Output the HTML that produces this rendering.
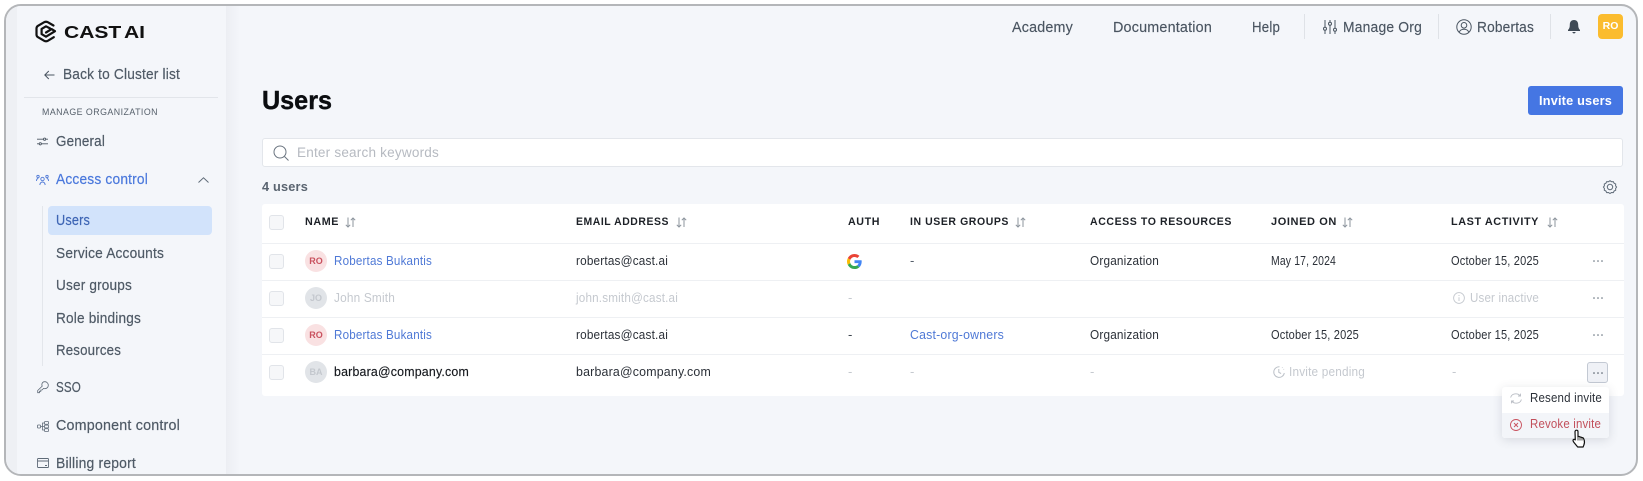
<!DOCTYPE html>
<html lang="en"><head><meta charset="utf-8"><title>Users - CAST AI</title>
<style>
html,body{margin:0;padding:0;background:#fff}
body{width:1643px;height:481px;overflow:hidden;position:relative;font-family:"Liberation Sans",Arial,sans-serif;font-size:13px;color:#2b3038}
#frame{position:absolute;left:4px;top:4px;width:1634px;height:472px;box-sizing:border-box;border:2px solid #b4b6b9;border-radius:17px;overflow:hidden;background:#f4f6fa}
#inner{position:absolute;left:-6px;top:-6px;width:1643px;height:481px}
.b{position:absolute}
.t{position:absolute;white-space:nowrap;line-height:20px;margin-top:-10px;transform-origin:0 50%;letter-spacing:.2px}
.nav{font-size:14.5px;color:#4f5a66;-webkit-text-stroke:.2px #4f5a66}
.top{font-size:14.5px;color:#4a5561;-webkit-text-stroke:.15px #4a5561}
.th{font-size:11px;font-weight:700;color:#1d2127;letter-spacing:.6px}
.m{color:#c5c9cf}.l{color:#4f79d6}.d{color:#2b3038}
.cb{position:absolute;left:269px;width:15px;height:15px;box-sizing:border-box;border:1px solid #e1e4e9;border-radius:3px;background:#f6f7f9}
.av{position:absolute;left:305px;width:22px;height:22px;border-radius:50%;text-align:center;line-height:22px;font-size:9px;font-weight:700}
.r{background:#f9e1e2;color:#c9525f}.g{background:#e1e4e8;color:#c4c8ce}
.ln{position:absolute;left:262px;width:1362px;height:1px;background:#eef0f3}
.dots{position:absolute;left:1592px;width:12px;height:2px}
.sep{position:absolute;top:14px;width:1px;height:25px;background:#dfe2e7}
svg{position:absolute;overflow:visible}
</style></head><body>
<div id="frame"><div id="inner">
<!-- left strip + sidebar -->
<div class="b" style="left:0;top:0;width:17px;height:481px;background:#eef0f4"></div>
<div class="b" style="left:17px;top:0;width:209px;height:481px;background:#f4f6fa"></div>
<div class="b" style="left:226px;top:0;width:14px;height:481px;background:linear-gradient(90deg,#eceef3,#f4f6fa)"></div>

<!-- logo -->
<svg style="left:35px;top:20px" width="22" height="23" viewBox="0 0 22 23" fill="none" stroke="#111" stroke-width="2.2" stroke-linejoin="round" stroke-linecap="round"><path d="M18.800 17.200 12.800 20.800c-1.100.6-2.500.6-3.600 0L3 17.200C2 16.600 1.500 15.700 1.500 14.600V8.400C1.500 7.300 2 6.400 3 5.800L9.200 2.200c1.100-.6 2.500-.6 3.600 0L18.500 5.500"/><path d="M15.200 8.500 11 6.300 6.600 8.900v5.200L11 16.700l9-5.500-3.400-2.100-5.600 3.400"/></svg>
<span class="t" style="left:64px;top:32px;font-size:17.500px;font-weight:700;color:#111;--w:81;letter-spacing:0;word-spacing:-2px">CAST AI</span>

<svg style="left:44px;top:70px" width="11" height="10" viewBox="0 0 11 10" fill="none" stroke="#4a5561" stroke-width="1"><path d="M10.500 5H.8M4.800 1 .8 5l4 4"/></svg>
<span class="t nav" style="left:63px;top:75px;--w:117">Back to Cluster list</span>
<div class="b" style="left:24px;top:97px;width:194px;height:1px;background:#e2e5ea"></div>
<span class="t" style="left:42px;top:112.500px;font-size:9.500px;color:#555f6a;letter-spacing:.5px;--w:116">MANAGE ORGANIZATION</span>

<!-- general icon -->
<svg style="left:37px;top:137px" width="11" height="9" viewBox="0 0 11 9" fill="none" stroke="#4a5561" stroke-width=".9"><path d="M0 2.200h6.500M8.800 2.200H11M0 6.800h2.200M4.500 6.800H11"/><circle cx="7.600" cy="2.200" r="1.100"/><circle cx="3.300" cy="6.800" r="1.100"/></svg>
<span class="t nav" style="left:56px;top:142px;--w:49">General</span>
<!-- access icon -->
<svg style="left:36px;top:174px" width="13" height="12" viewBox="0 0 13 12" fill="none" stroke="#4f79d6" stroke-width=".9"><circle cx="6.500" cy="5" r="1.700"/><path d="M3.800 11c.3-2 1.300-3 2.700-3s2.400 1 2.700 3"/><circle cx="2" cy="2.500" r="1.200"/><circle cx="11" cy="2.500" r="1.200"/><path d="M.5 7c0-1.500.6-2.500 1.800-2.500M12.500 7c0-1.500-.6-2.500-1.800-2.500"/></svg>
<span class="t" style="left:56px;top:180px;font-size:14.500px;color:#4a78dc;-webkit-text-stroke:.2px #4a78dc;--w:92">Access control</span>
<svg style="left:198px;top:177px" width="11" height="6" viewBox="0 0 11 6" fill="none" stroke="#5f6b78" stroke-width="1"><path d="M.5 5.500 5.500.8l5 4.700"/></svg>

<div class="b" style="left:42px;top:206px;width:1px;height:160px;background:#e3e6eb"></div>
<div class="b" style="left:48px;top:206px;width:164px;height:29px;background:#d2e3fb;border-radius:4px"></div>
<span class="t" style="left:56px;top:221px;font-size:14.500px;color:#3f66b5;-webkit-text-stroke:.2px #3f66b5;--w:34">Users</span>
<span class="t nav" style="left:56px;top:254px;--w:108">Service Accounts</span>
<span class="t nav" style="left:56px;top:286px;--w:76">User groups</span>
<span class="t nav" style="left:56px;top:319px;--w:85">Role bindings</span>
<span class="t nav" style="left:56px;top:351px;--w:65">Resources</span>

<svg style="left:37px;top:381px" width="12" height="13" viewBox="0 0 12 13" fill="none" stroke="#5f6b78" stroke-width=".8"><path d="M7.800.7a3.500 3.500 0 0 1 3.500 3.500c0 2-1.500 3.500-3.500 3.500-.5 0-1-.1-1.300-.2L5 9H3.800v1.300H2.500v1.400H.7V9.500l4.500-4.400C4.200 2.800 5.500.7 7.800.7z"/></svg>
<span class="t nav" style="left:56px;top:388px;--w:25">SSO</span>
<svg style="left:37px;top:421px" width="12" height="11" viewBox="0 0 12 11" fill="none" stroke="#5f6b78" stroke-width=".8"><rect x=".5" y="4" width="3" height="3" rx=".6"/><rect x="7.500" y=".5" width="4" height="2.800" rx=".6"/><rect x="7.500" y="4.100" width="4" height="2.800" rx=".6"/><rect x="7.500" y="7.700" width="4" height="2.800" rx=".6"/><path d="M3.500 5.500h4M5.500 5.500V2h2M5.500 5.500V9h2"/></svg>
<span class="t nav" style="left:56px;top:426px;--w:124">Component control</span>
<svg style="left:37px;top:458px" width="12" height="10" viewBox="0 0 12 10" fill="none" stroke="#5f6b78" stroke-width=".9"><rect x=".5" y=".5" width="11" height="9" rx=".8"/><path d="M.5 3h11M8 7.500h2"/></svg>
<span class="t nav" style="left:56px;top:464px;--w:80">Billing report</span>

<!-- top bar -->
<span class="t top" style="left:1012px;top:27.500px;--w:61">Academy</span>
<span class="t top" style="left:1113px;top:27.500px;--w:99">Documentation</span>
<span class="t top" style="left:1252px;top:27.500px;--w:28">Help</span>
<div class="sep" style="left:1304px"></div>
<svg style="left:1323px;top:20px" width="14" height="14" viewBox="0 0 14 14" fill="none" stroke="#4a5561" stroke-width="1"><path d="M2 0v7M2 10.500V14M7 0v2M7 5.500V14M12 0v8M12 11.500V14"/><circle cx="2" cy="8.700" r="1.500"/><circle cx="7" cy="3.700" r="1.500"/><circle cx="12" cy="9.700" r="1.500"/></svg>
<span class="t top" style="left:1343px;top:27.500px;--w:79">Manage Org</span>
<div class="sep" style="left:1438px"></div>
<svg style="left:1456px;top:19px" width="16" height="16" viewBox="0 0 16 16" fill="none" stroke="#4a5561" stroke-width="1"><circle cx="8" cy="8" r="7.200"/><circle cx="8" cy="6.300" r="2.800"/><path d="M3.200 13.200C4 11 5.800 10.200 8 10.200s4 .8 4.800 3"/></svg>
<span class="t top" style="left:1477px;top:27.500px;--w:57">Robertas</span>
<div class="sep" style="left:1550px"></div>
<svg style="left:1568px;top:20px" width="12" height="14" viewBox="0 0 12 14" fill="#3f4a55"><path d="M6 0c2.800 0 4.200 2 4.200 4.800 0 2.500.5 4 1.800 5.200v1H0v-1c1.300-1.200 1.800-2.700 1.800-5.200C1.800 2 3.200 0 6 0z"/><path d="M4.300 12h3.400c-.3 1-1 1.400-1.700 1.400S4.600 13 4.300 12z"/></svg>
<div class="b" style="left:1598px;top:14px;width:25px;height:25px;border-radius:4px;background:#fbbc2e;color:#fff;font-size:10.500px;font-weight:700;line-height:25px;text-align:center">RO</div>

<!-- heading -->
<span class="t" style="left:262px;top:100px;font-size:26px;font-weight:700;color:#0b0d10;-webkit-text-stroke:.4px #0b0d10;--w:70;letter-spacing:0;line-height:30px;margin-top:-15px">Users</span>
<div class="b" style="left:1528px;top:86px;width:95px;height:29px;background:#4576e3;border-radius:3px"></div>
<span class="t" style="left:1539px;top:100.500px;font-size:13px;font-weight:700;color:#fff;--w:73">Invite users</span>

<!-- search -->
<div class="b" style="left:262px;top:138px;width:1361px;height:29px;box-sizing:border-box;background:#fff;border:1px solid #e3e6eb;border-radius:3px"></div>
<svg style="left:273px;top:145px" width="16" height="16" viewBox="0 0 16 16" fill="none" stroke="#6b7580" stroke-width="1"><circle cx="7" cy="7" r="6"/><path d="M11.500 11.500 15.500 15.500"/></svg>
<span class="t" style="left:297px;top:153px;font-size:13.500px;color:#b6bac1;--w:142">Enter search keywords</span>
<span class="t" style="left:262px;top:187px;font-size:13px;font-weight:700;color:#5a6470;--w:46">4 users</span>
<svg style="left:1603px;top:180px" width="14" height="14" viewBox="0 0 14 14" fill="none" stroke="#5f6b78" stroke-width="1"><path d="M7 .7l1.500 1 1.800-.1.800 1.600 1.600.8-.1 1.800 1 1.200-1 1.500.1 1.700-1.600.8-.8 1.600-1.800-.1L7 13.500l-1.500-1-1.800.1-.8-1.600-1.600-.8.1-1.700-1-1.500 1-1.200-.1-1.800 1.600-.8.8-1.600 1.800.1z"/><circle cx="7" cy="7" r="2.700"/></svg>

<!-- table -->
<div class="b" style="left:262px;top:204px;width:1362px;height:192px;background:#fff;border-radius:3px"></div>
<div class="ln" style="top:243px"></div><div class="ln" style="top:280px"></div><div class="ln" style="top:317px"></div><div class="ln" style="top:354px"></div>
<div class="cb" style="top:215px"></div><div class="cb" style="top:254px"></div><div class="cb" style="top:291px"></div><div class="cb" style="top:328px"></div><div class="cb" style="top:365px"></div>

<span class="t th" style="left:305px;top:222px;--w:34">NAME</span>
<svg style="left:345px;top:217px" width="11" height="11" viewBox="0 0 11 11" fill="none" stroke="#8c949d" stroke-width="1"><path d="M3 .5v9.500M.8 7.800 3 10l2.200-2.200M8 10V1M5.800 3.200 8 1l2.200 2.200"/></svg>
<span class="t th" style="left:576px;top:222px;--w:93">EMAIL ADDRESS</span>
<svg style="left:676px;top:217px" width="11" height="11" viewBox="0 0 11 11" fill="none" stroke="#8c949d" stroke-width="1"><path d="M3 .5v9.500M.8 7.800 3 10l2.200-2.200M8 10V1M5.800 3.200 8 1l2.200 2.200"/></svg>
<span class="t th" style="left:848px;top:222px;--w:32">AUTH</span>
<span class="t th" style="left:910px;top:222px;--w:99">IN USER GROUPS</span>
<svg style="left:1015px;top:217px" width="11" height="11" viewBox="0 0 11 11" fill="none" stroke="#8c949d" stroke-width="1"><path d="M3 .5v9.500M.8 7.800 3 10l2.200-2.200M8 10V1M5.800 3.200 8 1l2.200 2.200"/></svg>
<span class="t th" style="left:1090px;top:222px;--w:142">ACCESS TO RESOURCES</span>
<span class="t th" style="left:1271px;top:222px;--w:66">JOINED ON</span>
<svg style="left:1342px;top:217px" width="11" height="11" viewBox="0 0 11 11" fill="none" stroke="#8c949d" stroke-width="1"><path d="M3 .5v9.500M.8 7.800 3 10l2.200-2.200M8 10V1M5.800 3.200 8 1l2.200 2.200"/></svg>
<span class="t th" style="left:1451px;top:222px;--w:88">LAST ACTIVITY</span>
<svg style="left:1547px;top:217px" width="11" height="11" viewBox="0 0 11 11" fill="none" stroke="#8c949d" stroke-width="1"><path d="M3 .5v9.500M.8 7.800 3 10l2.200-2.200M8 10V1M5.800 3.200 8 1l2.200 2.200"/></svg>

<!-- row 1 -->
<div class="av r" style="top:250px">RO</div>
<span class="t l" style="left:334px;top:261px;--w:98">Robertas Bukantis</span>
<span class="t d" style="left:576px;top:261px;--w:92">robertas@cast.ai</span>
<svg style="left:847px;top:254px" width="15" height="15" viewBox="0 0 48 48"><path fill="#EA4335" d="M24 9.500c3.500 0 6.700 1.300 9.100 3.400l6.800-6.800C35.800 2.400 30.200 0 24 0 14.600 0 6.500 5.400 2.600 13.200l7.900 6.100C12.400 13.700 17.700 9.500 24 9.500z"/><path fill="#4285F4" d="M47 24.500c0-1.600-.2-3.100-.4-4.500H24v9h12.900c-.6 3-2.200 5.500-4.700 7.200l7.700 6c4.400-4.100 7.100-10.200 7.100-17.700z"/><path fill="#FBBC05" d="M10.500 28.700A14.400 14.400 0 0 1 9.700 24c0-1.600.3-3.200.8-4.700l-7.900-6.100A23.900 23.900 0 0 0 0 24c0 3.900.9 7.500 2.600 10.800l7.900-6.100z"/><path fill="#34A853" d="M24 48c6.500 0 11.900-2.100 15.900-5.800l-7.700-6c-2.100 1.400-4.900 2.300-8.200 2.300-6.300 0-11.600-4.200-13.500-9.800l-7.900 6.100C6.500 42.600 14.600 48 24 48z"/></svg>
<span class="t" style="left:910px;top:261px;color:#555f6a;">-</span>
<span class="t d" style="left:1090px;top:261px;--w:69">Organization</span>
<span class="t d" style="left:1271px;top:261px;--w:65">May 17, 2024</span>
<span class="t d" style="left:1451px;top:261px;--w:88">October 15, 2025</span>
<svg class="dots" style="top:260px"><g fill="#5f6b78"><circle cx="2" cy="1" r=".8"/><circle cx="6" cy="1" r=".8"/><circle cx="10" cy="1" r=".8"/></g></svg>

<!-- row 2 -->
<div class="av g" style="top:287px">JO</div>
<span class="t m" style="left:334px;top:298px;--w:61">John Smith</span>
<span class="t m" style="left:576px;top:298px;--w:102">john.smith@cast.ai</span>
<span class="t m" style="left:848px;top:298px">-</span>
<svg style="left:1453px;top:292px" width="12" height="12" viewBox="0 0 12 12" fill="none" stroke="#c5c9cf" stroke-width=".9"><circle cx="6" cy="6" r="5.400"/><path d="M6 5.200V9M6 3v1"/></svg>
<span class="t m" style="left:1470px;top:298px;--w:69">User inactive</span>
<svg class="dots" style="top:297px"><g fill="#5f6b78"><circle cx="2" cy="1" r=".8"/><circle cx="6" cy="1" r=".8"/><circle cx="10" cy="1" r=".8"/></g></svg>

<!-- row 3 -->
<div class="av r" style="top:324px">RO</div>
<span class="t l" style="left:334px;top:335px;--w:98">Robertas Bukantis</span>
<span class="t d" style="left:576px;top:335px;--w:92">robertas@cast.ai</span>
<span class="t" style="left:848px;top:335px;color:#3f4750">-</span>
<span class="t l" style="left:910px;top:335px;--w:94">Cast-org-owners</span>
<span class="t d" style="left:1090px;top:335px;--w:69">Organization</span>
<span class="t d" style="left:1271px;top:335px;--w:88">October 15, 2025</span>
<span class="t d" style="left:1451px;top:335px;--w:88">October 15, 2025</span>
<svg class="dots" style="top:334px"><g fill="#5f6b78"><circle cx="2" cy="1" r=".8"/><circle cx="6" cy="1" r=".8"/><circle cx="10" cy="1" r=".8"/></g></svg>

<!-- row 4 -->
<div class="av g" style="top:361px">BA</div>
<span class="t" style="left:334px;top:372px;color:#15181d;-webkit-text-stroke:.15px #15181d;--w:135">barbara@company.com</span>
<span class="t d" style="left:576px;top:372px;--w:135">barbara@company.com</span>
<span class="t m" style="left:848px;top:372px">-</span>
<span class="t m" style="left:910px;top:372px">-</span>
<span class="t m" style="left:1090px;top:372px">-</span>
<svg style="left:1273px;top:366px" width="12" height="12" viewBox="0 0 12 12" fill="none" stroke="#bcc1c8" stroke-width="1"><path d="M6.500 .8A5.300 5.300 0 1 0 11.300 7"/><path d="M5.800 3v3.300l2.300 1.200"/><path d="M9 1.400l.5.300M10.600 3l.3.5"/></svg>
<span class="t m" style="left:1289px;top:372px;--w:76">Invite pending</span>
<span class="t m" style="left:1452px;top:372px">-</span>
<div class="b" style="left:1587px;top:362px;width:21px;height:21px;box-sizing:border-box;background:#eff1f6;border:1px solid #c3c9d3;border-radius:3px"></div>
<svg class="dots" style="top:372px"><g fill="#4a5561"><circle cx="2" cy="1" r=".8"/><circle cx="6" cy="1" r=".8"/><circle cx="10" cy="1" r=".8"/></g></svg>

<!-- dropdown -->
<div class="b" style="left:1502px;top:387px;width:107px;height:51px;background:#fff;border-radius:3px;box-shadow:0 2px 10px rgba(60,70,90,.16);overflow:hidden"><div class="b" style="left:0;top:26px;width:107px;height:25px;background:#f3f5f9"></div></div>
<svg style="left:1510px;top:393px" width="12" height="11" viewBox="0 0 12 11" fill="none" stroke="#b9bdc4" stroke-width=".9"><path d="M.6 4.500C1.200 2.200 3.300.8 5.800.8c1.800 0 3.300.6 4.500 2M10.500 .6v2.400H8M11.400 6.500C10.800 8.800 8.700 10.200 6.200 10.200c-1.800 0-3.300-.6-4.500-2M1.500 10.400V8H4"/></svg>
<span class="t" style="left:1530px;top:398px;color:#2b3038;--w:72">Resend invite</span>
<svg style="left:1510px;top:419px" width="12" height="12" viewBox="0 0 12 12" fill="none" stroke="#c9525f" stroke-width=".9"><circle cx="6" cy="6" r="5.500"/><path d="M4 4l4 4M8 4l-4 4"/></svg>
<span class="t" style="left:1530px;top:424px;color:#c2505c;--w:71">Revoke invite</span>
<!-- cursor -->
<svg style="left:1572px;top:429px" width="15" height="20" viewBox="0 0 15 20"><path d="M4.500 1.200c.9 0 1.500.6 1.500 1.500v5l.3-.1c.7-.3 1.400 0 1.700.5.600-.3 1.400-.1 1.700.6.700-.3 1.500 0 1.800.7l.7 1.700c.5 1.700.3 3.500-.4 5.100l-.7 1.800H5.700L2 13.500c-.9-1.200-1.400-2.100-.7-2.800.5-.5 1.300-.4 2 .2l-.3-8.100c0-.9.6-1.600 1.500-1.600z" fill="#fff" stroke="#111" stroke-width="1.200" stroke-linejoin="round"/><path d="M6 8v3.500M8 8.500v3M10 9v2.500" stroke="#111" stroke-width=".8"/></svg>
</div></div>
<script>
document.querySelectorAll('.t').forEach(function(e){
  var w=parseFloat(getComputedStyle(e).getPropertyValue('--w'));
  if(w){var m=e.getBoundingClientRect().width;if(m>0)e.style.transform='scaleX('+(w/m)+')';}
});
</script>
</body></html>
